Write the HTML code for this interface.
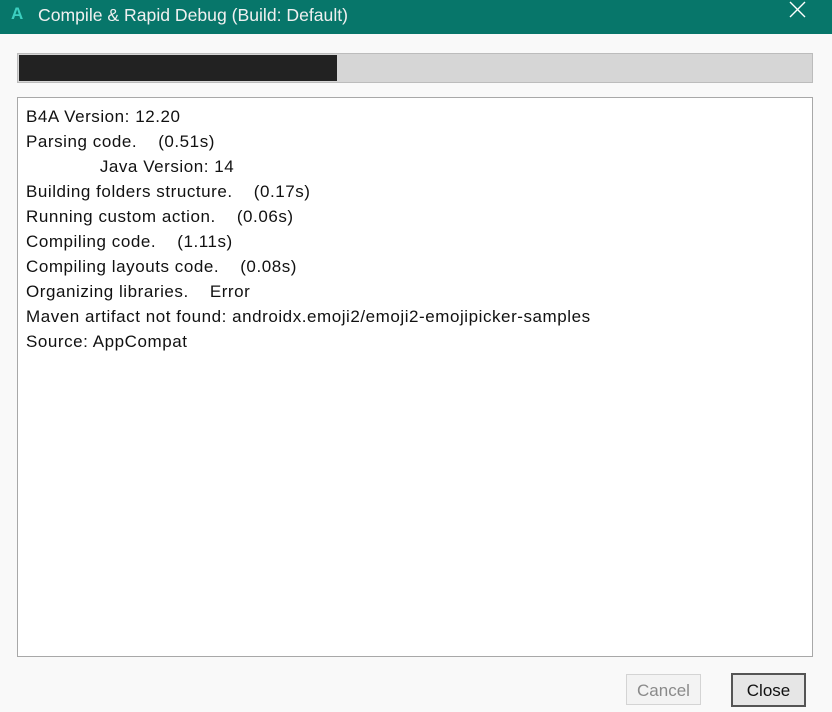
<!DOCTYPE html>
<html><head><style>
body{margin:0;width:832px;height:712px;background:#f9f9f9;font-family:"Liberation Sans",sans-serif;position:relative;overflow:hidden}
.tb{position:absolute;left:0;top:0;width:832px;height:34px;background:#07766a;color:#fff;font-size:17.6px}
.tb .a{position:absolute;left:11px;top:4px;color:#3ccfc0;font-weight:bold;font-size:17px}
.tb .t{position:absolute;left:38px;top:5px;color:#f0f0f0}
.tb .x{position:absolute;left:788px;top:0px}
.pb{position:absolute;left:17px;top:53px;width:794px;height:28px;border:1px solid #bcbcbc;background:#d6d6d6}
.pb div{position:absolute;left:1px;top:1px;width:318px;height:26px;background:#222}
.box{position:absolute;left:17px;top:97px;width:794px;height:558px;border:1px solid #a8a8a8;background:#fff}
.txt{position:absolute;left:8px;top:6px;font-size:17px;line-height:25px;color:#111;white-space:pre;letter-spacing:0.55px}
.btn{position:absolute;height:31px;font-size:17px;text-align:center;line-height:31px;box-sizing:border-box}
</style></head><body>
<div class="tb"><span class="a">A</span><span class="t">Compile &amp; Rapid Debug (Build: Default)</span>
<svg class="x" width="20" height="20" viewBox="0 0 20 20" style="top:0"><path d="M2 2L17 17M17 2L2 17" stroke="#fff" stroke-width="1.4"/></svg></div>
<div class="pb"><div></div></div>
<div class="box"><div class="txt">B4A Version: 12.20
Parsing code.    (0.51s)
              Java Version: 14
Building folders structure.    (0.17s)
Running custom action.    (0.06s)
Compiling code.    (1.11s)
Compiling layouts code.    (0.08s)
Organizing libraries.    Error
Maven artifact not found: androidx.emoji2/emoji2-emojipicker-samples
Source: AppCompat</div></div>
<div class="btn" style="left:626px;top:674px;width:75px;border:1px solid #d4d4d4;background:#f3f3f3;color:#8a8a8a">Cancel</div>
<div class="btn" style="left:731px;top:673px;width:75px;height:34px;line-height:32px;border:2px solid #555;background:#e6e6e6;color:#111">Close</div>
</body></html>
